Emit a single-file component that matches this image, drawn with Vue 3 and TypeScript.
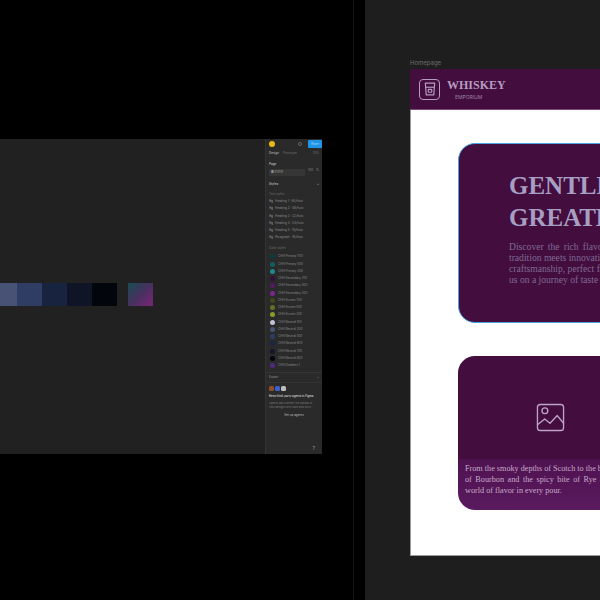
<template>
  <div class="stage">
    <section class="editor">
      <div class="canvas">
        <div class="swatches">
          <span v-for="c in shades" :key="c" class="swatch" :style="{ background: c }"></span>
          <span class="swatch gradient"></span>
        </div>
      </div>
      <aside class="panel">
        <div class="top">
          <span class="avatar"></span>
          <span class="spacer"></span>
          <span class="play"></span>
          <span class="share">Share</span>
        </div>
        <div class="tabs"><b>Design</b><span>Prototype</span><span class="zoom">75%</span></div>
        <div class="group">
          <p class="head">Page</p>
          <div class="page-row"><span class="field">■ B1B1B</span><span>100</span><span>%</span></div>
        </div>
        <div class="group">
          <p class="head between"><span>Styles</span><span>+</span></p>
          <p class="sub">Text styles</p>
          <p v-for="t in textStyles" :key="t" class="text-style"><i>Ag</i>{{ t }}</p>
          <p class="sub colour-title">Color styles</p>
          <p v-for="s in colourStyles" :key="s.name" class="colour-style">
            <span class="dot" :style="{ background: s.color }"></span>{{ s.name }}
          </p>
        </div>
        <div class="divider"></div>
        <p class="export between"><span>Export</span><span>+</span></p>
        <div class="divider"></div>
        <div class="plugin">
          <div class="plugin-icons"><span class="o"></span><span class="b"></span><span class="w"></span></div>
          <p class="plugin-title">Keep third-party agents in Figma</p>
          <p class="plugin-copy">Agents can connect the canvas to<br />your designs with MCP and skills</p>
          <p class="plugin-link">Set up agents</p>
        </div>
        <span class="help">?</span>
      </aside>
    </section>

    <span class="gutter"></span>

    <section class="board">
      <p class="frame-label">Homepage</p>
      <div class="frame">
        <header class="site-head">
          <span class="logo">
            <svg viewBox="0 0 24 24" width="14" height="14" fill="none" stroke="currentColor" stroke-width="2" stroke-linejoin="round">
              <path d="M4 2h16l-1.5 20h-13z" />
              <path d="M5 9h14" />
              <rect x="9" y="12.5" width="6" height="5" rx="1" />
            </svg>
          </span>
          <div class="brand">
            <strong>WHISKEY</strong>
            <small>EMPORIUM</small>
          </div>
        </header>
        <main class="site-body">
          <article class="hero">
            <h1>GENTLEMEN'S<br />GREAT EMPORIUM</h1>
            <p>
              <span class="first">Discover the rich flavors of whiskey, where</span>
              <span>tradition meets innovation in every bottle, and</span>
              <span>craftsmanship, perfect for sharing. Join</span>
              <span>us on a journey of taste and heritage.</span>
            </p>
          </article>
          <article class="feature">
            <div class="picture">
              <svg viewBox="0 0 30 30" width="29" height="29" fill="none" stroke="currentColor" stroke-width="1.4" stroke-linejoin="round" stroke-linecap="round">
                <rect x="1.5" y="1.5" width="27" height="27" rx="3" />
                <circle cx="9.2" cy="8" r="3" />
                <path d="M1.5 22.5L9 16.5l5.5 4.5L22 13l6.5 8" />
              </svg>
            </div>
            <p class="feature-copy">
              <span>From the smoky depths of Scotch to the bright sweetness</span>
              <span class="spread">of Bourbon and the spicy bite of Rye — discover a</span>
              <span>world of flavor in every pour.</span>
            </p>
          </article>
        </main>
      </div>
    </section>
  </div>
</template>

<script setup lang="ts">
const shades = ['#475274', '#2f3d64', '#18233f', '#0f1527', '#03050d'];

const textStyles = [
  'Heading 1 · 64/Auto',
  'Heading 2 · 48/Auto',
  'Heading 3 · 32/Auto',
  'Heading 4 · 24/Auto',
  'Heading 5 · 18/Auto',
  'Paragraph · 16/Auto',
];

const colourStyles = [
  { name: 'CHH Primary 700', color: '#0d3c3c' },
  { name: 'CHH Primary 500', color: '#0f5f5f' },
  { name: 'CHH Primary 300', color: '#1c8a8a' },
  { name: 'CHH Secondary 700', color: '#32103a' },
  { name: 'CHH Secondary 500', color: '#551a64' },
  { name: 'CHH Secondary 300', color: '#7d2690' },
  { name: 'CHH Accent 700', color: '#41481a' },
  { name: 'CHH Accent 500', color: '#666f22' },
  { name: 'CHH Accent 300', color: '#8f9a2c' },
  { name: 'CHH Neutral 100', color: '#c0c0d8' },
  { name: 'CHH Neutral 300', color: '#475274' },
  { name: 'CHH Neutral 500', color: '#2f3d64' },
  { name: 'CHH Neutral 600', color: '#1c2640' },
  { name: 'CHH Neutral 700', color: '#12172a' },
  { name: 'CHH Neutral 800', color: '#03050d' },
  { name: 'CHH Gradient 1', color: '#4f2a80' },
];
</script>

<style>
html,
body {
  margin: 0;
  background: #000;
}
</style>

<style scoped>
.stage {
  display: flex;
  width: 600px;
  height: 600px;
  overflow: hidden;
  background: #000;
  font-family: "Inter", "Liberation Sans", sans-serif;
}
p,
h1 {
  margin: 0;
}
.editor {
  display: flex;
  align-items: flex-start;
  flex: 0 0 353px;
  padding-top: 139px;
  box-sizing: border-box;
}
.canvas {
  width: 265px;
  height: 315px;
  background: #212121;
  padding-top: 144px;
  box-sizing: border-box;
  overflow: hidden;
}
.swatches {
  display: flex;
  margin-left: -8px;
}
.swatch {
  flex: none;
  width: 25px;
  height: 23px;
}
.swatch.gradient {
  margin-left: 11px;
  background: linear-gradient(135deg, #184c52, #47305f 50%, #7b2478);
}
.panel {
  position: relative;
  width: 57px;
  height: 315px;
  box-sizing: border-box;
  background: #2a2a2a;
  border-left: 1px solid #333;
  color: #9c9c9c;
  font-size: 3px;
  line-height: 1;
  overflow: hidden;
}
.top {
  display: flex;
  align-items: center;
  gap: 3px;
  height: 10px;
  padding: 0 0 0 3px;
}
.avatar {
  width: 6px;
  height: 6px;
  border-radius: 50%;
  background: #e8bb1c;
}
.spacer {
  flex: 1;
}
.play {
  width: 4px;
  height: 4px;
  margin-right: 3px;
  border: 1px solid #666;
  border-radius: 50%;
  box-sizing: border-box;
}
.share {
  width: 14px;
  height: 8px;
  border-radius: 1px;
  background: #1f95e8;
  color: #a9d8f7;
  text-align: center;
  line-height: 8px;
}
.tabs {
  display: flex;
  gap: 4px;
  padding: 3px 3px 4px;
  color: #707070;
}
.tabs b {
  color: #b4b4b4;
  font-weight: 500;
}
.zoom {
  margin-left: auto;
}
.divider {
  height: 1px;
  background: #343434;
}
.group {
  padding: 4px 3px 3px;
}
.head {
  color: #b8b8b8;
  font-weight: 600;
}
.between {
  display: flex;
  justify-content: space-between;
}
.page-row {
  display: flex;
  gap: 3px;
  margin-top: 3px;
  color: #8f8f8f;
}
.field {
  flex: 1;
  height: 7px;
  padding-left: 2px;
  line-height: 7px;
  background: #363636;
  border-radius: 1px;
}
.sub {
  margin-top: 7px;
  color: #6f6f6f;
}
.text-style {
  display: flex;
  gap: 2px;
  margin-top: 4.2px;
  color: #8a8a8a;
}
.text-style i {
  font-style: normal;
  color: #a8a8a8;
}
.colour-title {
  margin: 8px 0 3px;
}
.colour-style {
  display: flex;
  align-items: center;
  gap: 3px;
  height: 7.25px;
  padding-left: 1px;
  color: #8a8a8a;
}
.dot {
  flex: none;
  width: 5px;
  height: 5px;
  border-radius: 50%;
}
.export {
  padding: 3px;
  color: #929292;
}
.plugin {
  padding: 3px;
}
.plugin-icons {
  display: flex;
  gap: 1px;
}
.plugin-icons span {
  width: 5px;
  height: 5px;
  border-radius: 1.5px;
}
.plugin-icons .o {
  background: #8f4d2c;
}
.plugin-icons .b {
  background: #3a5fd0;
}
.plugin-icons .w {
  background: #bdbdbd;
}
.plugin-title {
  margin-top: 4px;
  color: #cccccc;
  font-weight: 600;
  font-size: 2.8px;
  white-space: nowrap;
}
.plugin-copy {
  margin-top: 3px;
  line-height: 4.5px;
  font-size: 2.7px;
  color: #7d7d7d;
  white-space: nowrap;
}
.plugin-link {
  margin-top: 4px;
  text-align: center;
  color: #bdbdbd;
}
.help {
  position: absolute;
  right: 7px;
  bottom: 3px;
  font-size: 5px;
  color: #999;
}
.gutter {
  flex: 0 0 12px;
  background: #000;
  border-left: 1px solid #141414;
  box-sizing: border-box;
}
.board {
  flex: 1;
  min-width: 0;
  background: #1e1e1e;
  padding: 60px 0 0 45px;
  overflow: hidden;
}
.frame-label {
  height: 9px;
  font-size: 6px;
  line-height: 6px;
  color: #6e6e6e;
}
.frame {
  width: 400px;
  height: 487px;
  background: #fff;
  box-shadow: inset 1px -1px 0 #9a9a9a;
}
.site-head {
  display: flex;
  align-items: center;
  gap: 7px;
  height: 41px;
  padding-left: 9px;
  box-sizing: border-box;
  background: #430d3e;
  border-bottom: 1px solid #7b4d78;
  color: #b59cc0;
}
.logo {
  display: flex;
  align-items: center;
  justify-content: center;
  width: 19px;
  height: 19px;
  border: 1px solid #b59cc0;
  border-radius: 4px;
}
.brand strong {
  display: block;
  font: 700 12px/14px "Liberation Serif", serif;
}
.brand small {
  display: block;
  margin: 2px 0 0 8px;
  font-size: 5px;
  line-height: 6px;
  color: #9c84a8;
}
.site-body {
  display: flex;
  flex-direction: column;
  gap: 33px;
  padding: 33px 0 0 48px;
}
.hero {
  width: 380px;
  height: 180px;
  box-sizing: border-box;
  padding: 26px 0 0 50px;
  background: #430d3e;
  border: 1px solid #4aa3e0;
  border-radius: 17px;
  color: #a79fc3;
}
h1 {
  font: 700 25px/32px "Liberation Serif", serif;
  word-spacing: -6px;
  white-space: nowrap;
}
.hero p {
  margin-top: 7px;
  font: 400 9.6px/11px "Liberation Serif", serif;
  color: #7f6a94;
  white-space: nowrap;
}
.hero p span,
.feature-copy span {
  display: block;
}
.hero p .first {
  word-spacing: 1.8px;
}
.feature {
  display: flex;
  flex-direction: column;
  width: 380px;
  height: 154px;
  border-radius: 17px;
  overflow: hidden;
}
.picture {
  display: flex;
  align-items: center;
  height: 103px;
  padding: 20px 0 0 78px;
  box-sizing: border-box;
  background: #430d3e;
  color: #bda3c8;
}
.feature-copy {
  flex: 1;
  padding: 4px 7px;
  background: linear-gradient(#4f1250, #5a1a5e);
  font: 400 8.2px/11px "Liberation Serif", serif;
  color: #c4aac8;
  white-space: nowrap;
}
.feature-copy .spread {
  word-spacing: 1.5px;
}
</style>
